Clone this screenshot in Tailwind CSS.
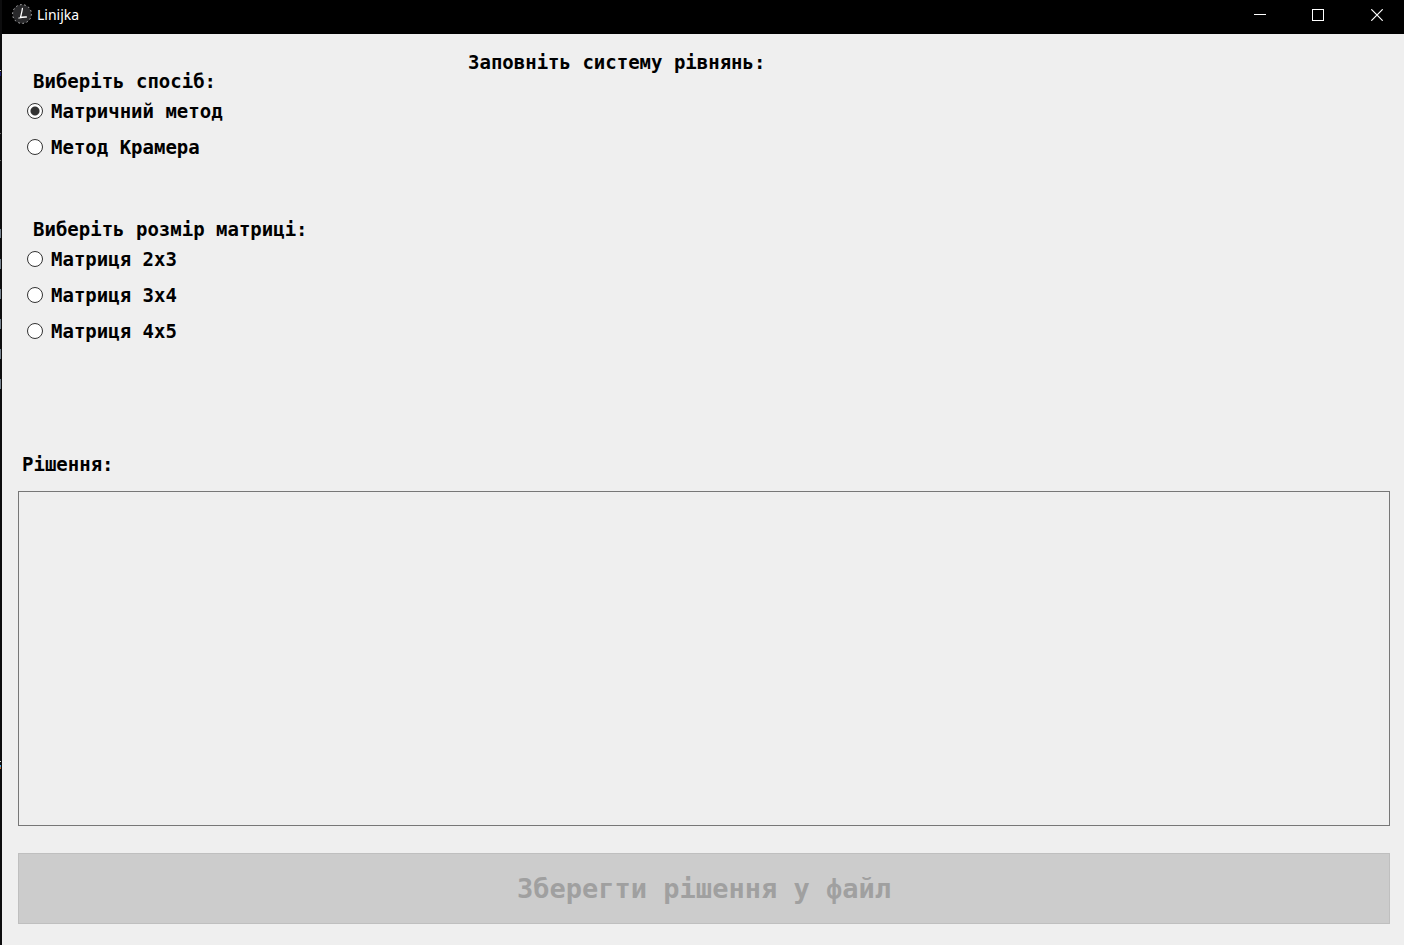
<!DOCTYPE html>
<html lang="uk">
<head>
<meta charset="utf-8">
<meta name="viewport" content="width=device-width, initial-scale=1">
<title>Linijka</title>
<script src="https://cdn.jsdelivr.net/npm/@tailwindcss/browser@4"></script>
</head>
<body class="min-h-screen flex bg-[#efefef] text-black">
  <svg class="w-[2px] shrink-0 bg-[#0d0d0e]" aria-hidden="true">
    <g fill="#74808c">
      <rect y="229" width="1" height="9"/><rect y="259" width="1" height="10"/><rect y="289" width="1" height="10"/><rect y="319" width="1" height="10"/><rect y="349" width="1" height="10"/><rect y="379" width="1" height="10"/>
    </g>
    <rect y="70" width="1" height="1" fill="#ddd"/><rect y="72" width="1" height="4" fill="#1b1b70"/>
    <rect y="133" width="1" height="1" fill="#666"/><rect y="160" width="1" height="1" fill="#666"/>
    <rect y="761" width="1" height="1" fill="#ddd"/><rect y="765" width="1" height="2" fill="#4aa0d8"/><rect y="767" width="1" height="2" fill="#b56a35"/>
  </svg>
  <div class="flex-1 min-w-0 flex flex-col">
    <header class="h-[34px] shrink-0 bg-black text-white flex items-start pl-[10px]">
      <svg class="size-5 mt-1" viewBox="0 0 20 20" fill="none" aria-hidden="true">
        <circle cx="10" cy="10" r="9.4" fill="#29292b" stroke="#bbb" stroke-width="1" stroke-dasharray="1.6 2.6"/>
        <path d="M10.4 4.5C10 8 9 11 8.5 13.6M7 14C9.5 13.2 12 12.9 14.4 13" stroke="#fff" stroke-width="1.3" stroke-linecap="round"/>
      </svg>
      <h1 class="h-[30px] ml-[5px] flex items-center font-['Noto_Sans',sans-serif] text-sm">Linijka</h1>
      <div class="ml-auto h-[30px] flex">
        <button type="button" aria-label="Згорнути" class="w-[58px] grid place-items-center"><svg class="size-3" viewBox="0 0 12 12"><path d="M0 5.5H12" stroke="#fff"/></svg></button>
        <button type="button" aria-label="Розгорнути" class="w-[58px] grid place-items-center"><svg class="size-3" viewBox="0 0 12 12"><rect x=".5" y=".5" width="11" height="11" fill="none" stroke="#fff"/></svg></button>
        <button type="button" aria-label="Закрити" class="w-[57px] pl-[3px] grid place-items-center"><svg class="size-3" viewBox="0 0 12 12"><path d="M.3 .3L11.7 11.7M11.7 .3L.3 11.7" stroke="#fff" stroke-width="1.2"/></svg></button>
      </div>
    </header>
    <main class="flex-1 flex flex-col pl-4 pr-[14px] pb-[21px] font-['DejaVu_Sans_Mono',monospace] font-bold text-[19px] leading-6">
      <div class="flex min-h-[418px]">
        <form class="w-[450px] pl-[9px] pt-[35px]">
          <fieldset>
            <legend class="pl-[6px]">Виберіть спосіб:</legend>
            <label class="flex items-center gap-2 h-9"><input type="radio" name="method" checked class="appearance-none size-4 rounded-full border border-[#333] bg-[radial-gradient(circle,#333_4px,#fff_5px)]">Матричний метод</label>
            <label class="flex items-center gap-2 h-9"><input type="radio" name="method" class="appearance-none size-4 rounded-full border border-[#333] bg-white">Метод Крамера</label>
          </fieldset>
          <fieldset class="mt-[52px]">
            <legend class="pl-[6px]">Виберіть розмір матриці:</legend>
            <label class="flex items-center gap-2 h-9"><input type="radio" name="size" class="appearance-none size-4 rounded-full border border-[#333] bg-white">Матриця 2x3</label>
            <label class="flex items-center gap-2 h-9"><input type="radio" name="size" class="appearance-none size-4 rounded-full border border-[#333] bg-white">Матриця 3x4</label>
            <label class="flex items-center gap-2 h-9"><input type="radio" name="size" class="appearance-none size-4 rounded-full border border-[#333] bg-white">Матриця 4x5</label>
          </fieldset>
        </form>
        <h2 class="pt-4">Заповніть систему рівнянь:</h2>
      </div>
      <label for="answer" class="pl-1">Рішення:</label>
      <textarea id="answer" readonly class="mt-[15px] flex-1 min-h-40 resize-none border border-[#777] bg-[#efefef] p-2 outline-none"></textarea>
      <button type="button" disabled class="mt-[27px] h-[71px] border border-[#bfbfbf] bg-[#ccc] text-[#a0a0a0] text-[27px]">Зберегти рішення у файл</button>
    </main>
  </div>
</body>
</html>
